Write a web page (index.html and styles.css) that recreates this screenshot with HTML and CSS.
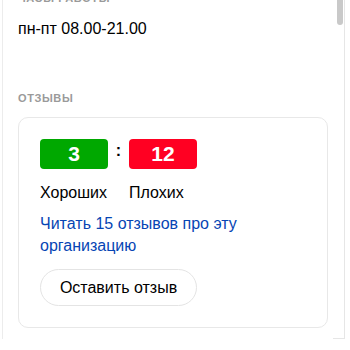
FILE: index.html
```html
<!DOCTYPE html>
<html lang="ru">
<head>
<meta charset="utf-8">
<link rel="stylesheet" href="styles.css">
</head>
<body>
<div class="panel">
  <div class="content">
    <div class="section-title cut">Часы работы</div>
    <div class="hours">пн-пт 08.00-21.00</div>
    <div class="section-title reviews-title">Отзывы</div>
    <div class="card">
      <div class="score">
        <div class="badge good">3</div>
        <div class="colon">:</div>
        <div class="badge bad">12</div>
      </div>
      <div class="labels">
        <span class="label">Хороших</span>
        <span class="label">Плохих</span>
      </div>
      <a class="link" href="#">Читать 15 отзывов про эту организацию</a>
      <button class="btn">Оставить отзыв</button>
    </div>
  </div>
  <div class="scrollbar"><div class="thumb"></div></div>
</div>
</body>
</html>
```
FILE: styles.css
```css
html, body {
  margin: 0;
  padding: 0;
  background: #fff;
  font-family: "Liberation Sans", Arial, sans-serif;
  color: #000;
  overflow: hidden;
}
.panel {
  display: flex;
  width: 346px;
  height: 339px;
}
.content {
  width: 331px;
  border-left: 1px solid #ececec;
  margin-left: 2px;
  padding-left: 15px;
  box-sizing: border-box;
  overflow: hidden;
}
.scrollbar {
  width: 12px;
  border-right: 1px solid #e6e6e6;
  border-bottom: 1px solid #e6e6e6;
  box-sizing: border-box;
  padding-left: 4px;
}
.thumb {
  width: 6px;
  height: 25px;
  background: #c9c9c9;
  border-radius: 0 0 3px 3px;
}
.section-title {
  font-size: 11px;
  font-weight: bold;
  color: #9a9a9a;
  text-transform: uppercase;
  letter-spacing: 0.6px;
  line-height: 14px;
}
.cut {
  margin-top: -9px;
}
.hours {
  margin-top: 14px;
  font-size: 16px;
  line-height: 20px;
}
.reviews-title {
  margin-top: 52px;
}
.card {
  margin-top: 12px;
  width: 310px;
  height: 211px;
  box-sizing: border-box;
  border: 1px solid #e8e8e8;
  border-radius: 10px;
  padding: 21px 21px 0;
  display: flex;
  flex-direction: column;
  align-items: flex-start;
}
.score {
  display: flex;
  align-items: center;
}
.badge {
  width: 68px;
  height: 30px;
  border-radius: 4px;
  color: #fff;
  font-weight: bold;
  font-size: 21px;
  display: flex;
  align-items: center;
  justify-content: center;
}
.good { background: #00a800; }
.bad { background: #ff0022; }
.colon {
  width: 21px;
  text-align: center;
  font-size: 16px;
  font-weight: bold;
  margin-top: -6px;
}
.labels {
  margin-top: 14px;
  display: flex;
  font-size: 16px;
  line-height: 20px;
}
.label:first-child { width: 89px; }
.link {
  margin-top: 10px;
  color: #0645b4;
  text-decoration: none;
  font-size: 16px;
  line-height: 22px;
  width: 240px;
}
.btn {
  margin-top: 12px;
  height: 37px;
  width: 157px;
  border: 1px solid #e4e4e4;
  border-radius: 19px;
  background: #fff;
  font-family: inherit;
  font-size: 16px;
  color: #000;
  padding: 0;
}
```
